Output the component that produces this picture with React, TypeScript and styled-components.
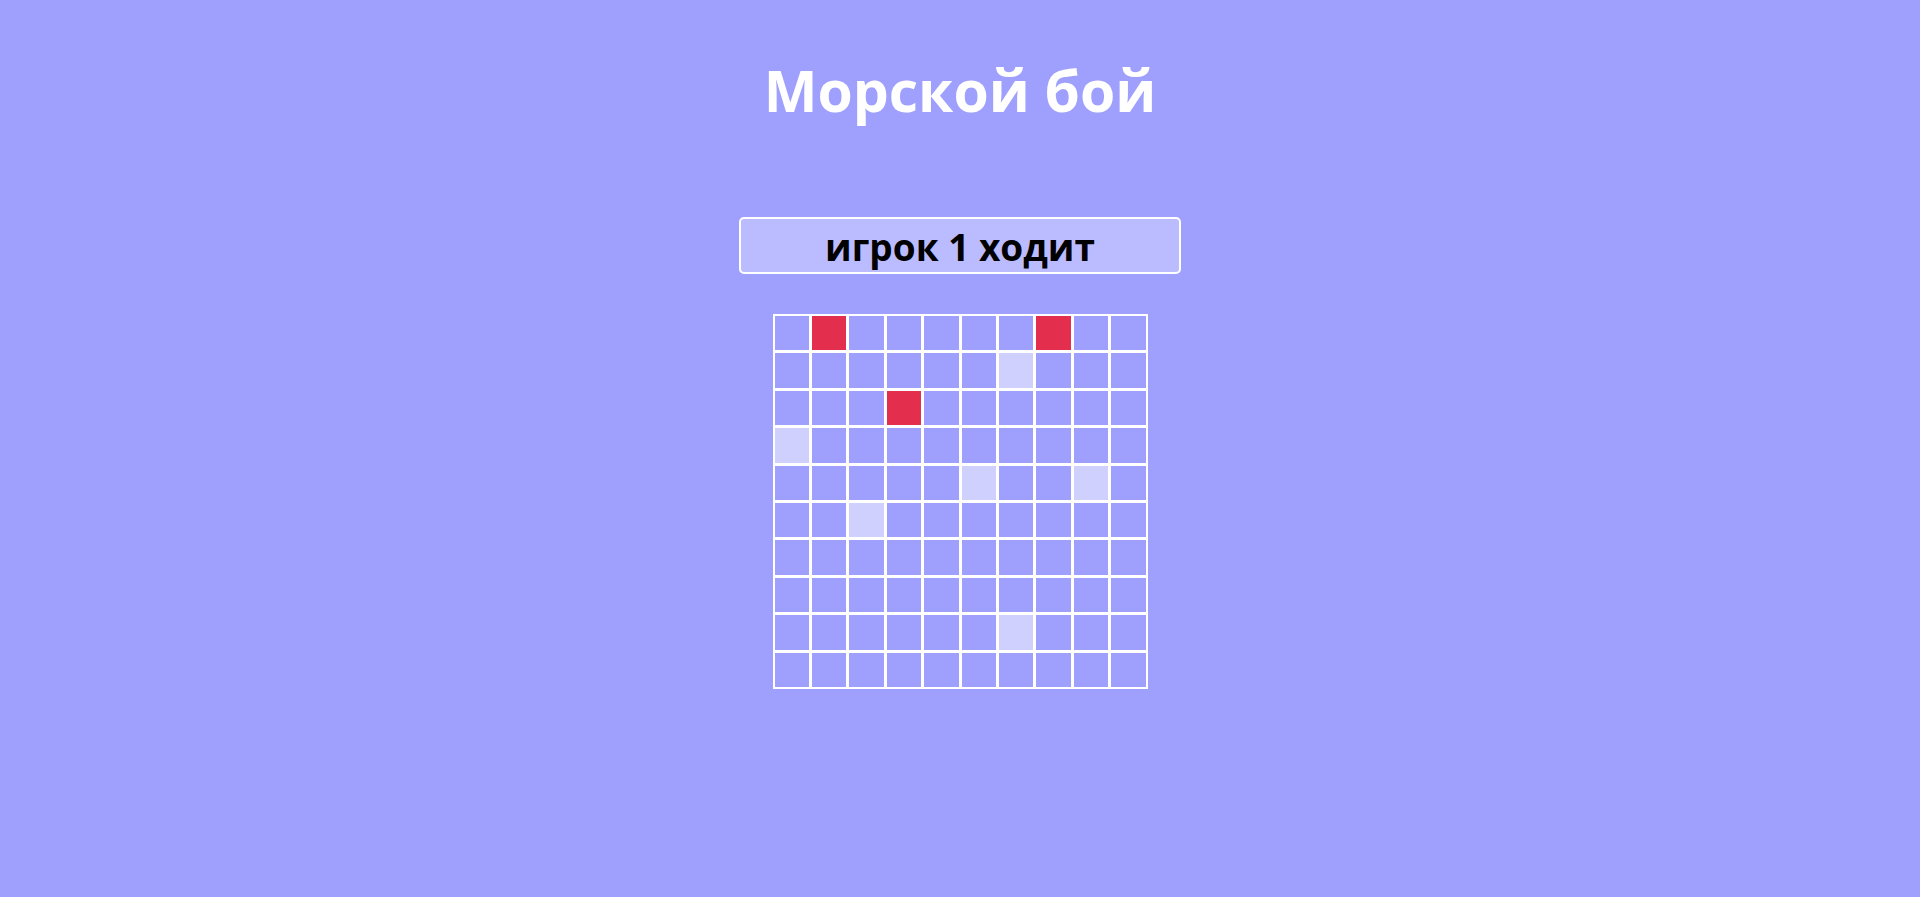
import styled, { createGlobalStyle } from 'styled-components'

// ─── Data ────────────────────────────────────────────────────────

type CellState = 'empty' | 'hit' | 'miss'

// h = hit (red), m = miss (light), . = untouched
const BOARD = [
  '.h.....h..',
  '......m...',
  '...h......',
  'm.........',
  '.....m..m.',
  '..m.......',
  '..........',
  '..........',
  '......m...',
  '..........',
]

const toState = (ch: string): CellState => (ch === 'h' ? 'hit' : ch === 'm' ? 'miss' : 'empty')

// ─── Styled Components ──────────────────────────────────────────

const GlobalStyle = createGlobalStyle`
  html, body {
    margin: 0;
    padding: 0;
    background: #9fa0fd;
  }
  body {
    font-family: "Open Sans", "Noto Sans", "Liberation Sans", sans-serif;
  }
`

const Page = styled.main`
  min-height: 100vh;
  display: flex;
  flex-direction: column;
  align-items: center;
  background: #9fa0fd;
`

const Title = styled.h1`
  margin: 52px 0 0;
  font-size: 57px;
  font-weight: 700;
  color: #ffffff;
  line-height: 76px;
`

const Status = styled.div`
  box-sizing: border-box;
  margin-top: 89px;
  width: 442px;
  height: 57px;
  padding-top: 4px;
  text-align: center;
  background: #bbbcff;
  border: 2px solid #ffffff;
  border-radius: 5px;
  font-size: 37px;
  font-weight: 700;
  line-height: 48px;
  color: #000000;
`

const Board = styled.div`
  margin-top: 40px;
  width: 375px;
  box-sizing: border-box;
  display: grid;
  grid-template-columns: repeat(10, 1fr);
  gap: 1px;
  padding: 1px;
  background: #ffffff;
`

const Cell = styled.div<{ $state: CellState }>`
  box-sizing: border-box;
  aspect-ratio: 1;
  border: 1px solid #ffffff;
  background: ${({ $state }) =>
    $state === 'hit' ? '#e32f4d' : $state === 'miss' ? '#cfd0fd' : '#9fa0fd'};
`

// ─── Component ────────────────────────────────────────────────

export default function App() {
  return (
    <>
      <GlobalStyle />
      <Page>
        <Title>Морской бой</Title>
        <Status>игрок 1 ходит</Status>
        <Board>
          {BOARD.map((row, r) =>
            row.split('').map((ch, c) => <Cell key={`${r}-${c}`} $state={toState(ch)} />)
          )}
        </Board>
      </Page>
    </>
  )
}
